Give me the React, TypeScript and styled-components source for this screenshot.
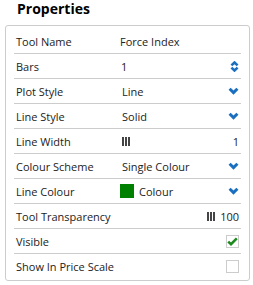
import styled, { createGlobalStyle } from "styled-components";

const GlobalStyle = createGlobalStyle`
  body {
    margin: 0;
    background: #fff;
    font-family: "Open Sans", "Liberation Sans", sans-serif;
    color: #222;
  }
`;

const Title = styled.h1`
  margin: 0;
  height: 25px;
  padding-left: 17px;
  font: bold 14px/18px "Open Sans", sans-serif;
  color: #000;
`;

const Panel = styled.div`
  margin-left: 5px;
  border: 1px solid #ccc;
  border-radius: 3px;
  padding: 3px 8px 2px 8px;
  width: 227px;
`;

const Row = styled.div`
  display: grid;
  grid-template-columns: 104px 1fr auto;
  align-items: center;
  height: 24px;
  padding: 0 2px 0 2px;
  font-size: 11px;
  border-bottom: 1px solid #ccc;

  &:last-child {
    border-bottom: none;
  }
`;

const Label = styled.span<{ $wide?: boolean }>`
  white-space: nowrap;
  grid-column: ${(p) => (p.$wide ? "1 / 3" : "auto")};
`;

const Value = styled.span<{ $indent?: number }>`
  display: flex;
  align-items: center;
  gap: 5px;
  white-space: nowrap;
  padding-left: ${(p) => p.$indent ?? 0}px;
`;

const Right = styled.span`
  display: flex;
  align-items: center;
  justify-content: flex-end;
  gap: 5px;
`;

const Swatch = styled.span<{ $color: string }>`
  width: 14px;
  height: 14px;
  background: ${(p) => p.$color};
`;

const Check = styled.span`
  width: 11px;
  height: 11px;
  border: 1px solid #ccc;
  display: flex;
  align-items: center;
  justify-content: center;
`;

const Chevron = () => (
  <svg width="11" height="8" viewBox="0 0 11 8">
    <path d="M1.6 1.8 L5.5 5.6 L9.4 1.8" fill="none" stroke="#1a6fc0" strokeWidth="3" />
  </svg>
);

const Spinner = () => (
  <svg width="9" height="11" viewBox="0 0 9 11">
    <path d="M1.4 4.4 L4.5 1.5 L7.6 4.4" fill="none" stroke="#1a6fc0" strokeWidth="2.6" />
    <path d="M1.4 6.6 L4.5 9.5 L7.6 6.6" fill="none" stroke="#1a6fc0" strokeWidth="2.6" />
  </svg>
);

const Bars = () => (
  <svg width="8" height="9" viewBox="0 0 8 9">
    <rect x="0" y="0" width="2" height="9" fill="#444" />
    <rect x="3" y="0" width="2" height="9" fill="#444" />
    <rect x="6" y="0" width="2" height="9" fill="#444" />
  </svg>
);

const Tick = () => (
  <svg width="11" height="9" viewBox="0 0 11 9">
    <path d="M1.2 4.6 L4 7.2 L9.8 1.4" fill="none" stroke="#1d8a1d" strokeWidth="2.6" />
  </svg>
);

const App = () => {
  return (
    <>
      <GlobalStyle />
      <Title>Properties</Title>
      <Panel>
        <Row>
          <Label>Tool Name</Label>
          <Value>Force Index</Value>
        </Row>
        <Row>
          <Label>Bars</Label>
          <Value $indent={1}>1</Value>
          <Right>
            <Spinner />
          </Right>
        </Row>
        <Row>
          <Label>Plot Style</Label>
          <Value $indent={2}>Line</Value>
          <Right>
            <Chevron />
          </Right>
        </Row>
        <Row>
          <Label>Line Style</Label>
          <Value $indent={2}>Solid</Value>
          <Right>
            <Chevron />
          </Right>
        </Row>
        <Row>
          <Label>Line Width</Label>
          <Value $indent={2}>
            <Bars />
          </Value>
          <Right>1</Right>
        </Row>
        <Row>
          <Label>Colour Scheme</Label>
          <Value $indent={2}>Single Colour</Value>
          <Right>
            <Chevron />
          </Right>
        </Row>
        <Row>
          <Label>Line Colour</Label>
          <Value>
            <Swatch $color="#008000" />
            Colour
          </Value>
          <Right>
            <Chevron />
          </Right>
        </Row>
        <Row>
          <Label $wide>Tool Transparency</Label>
          <Right>
            <Bars />
            100
          </Right>
        </Row>
        <Row>
          <Label>Visible</Label>
          <span />
          <Right>
            <Check>
              <Tick />
            </Check>
          </Right>
        </Row>
        <Row>
          <Label>Show In Price Scale</Label>
          <span />
          <Right>
            <Check />
          </Right>
        </Row>
      </Panel>
    </>
  );
};

export default App;
